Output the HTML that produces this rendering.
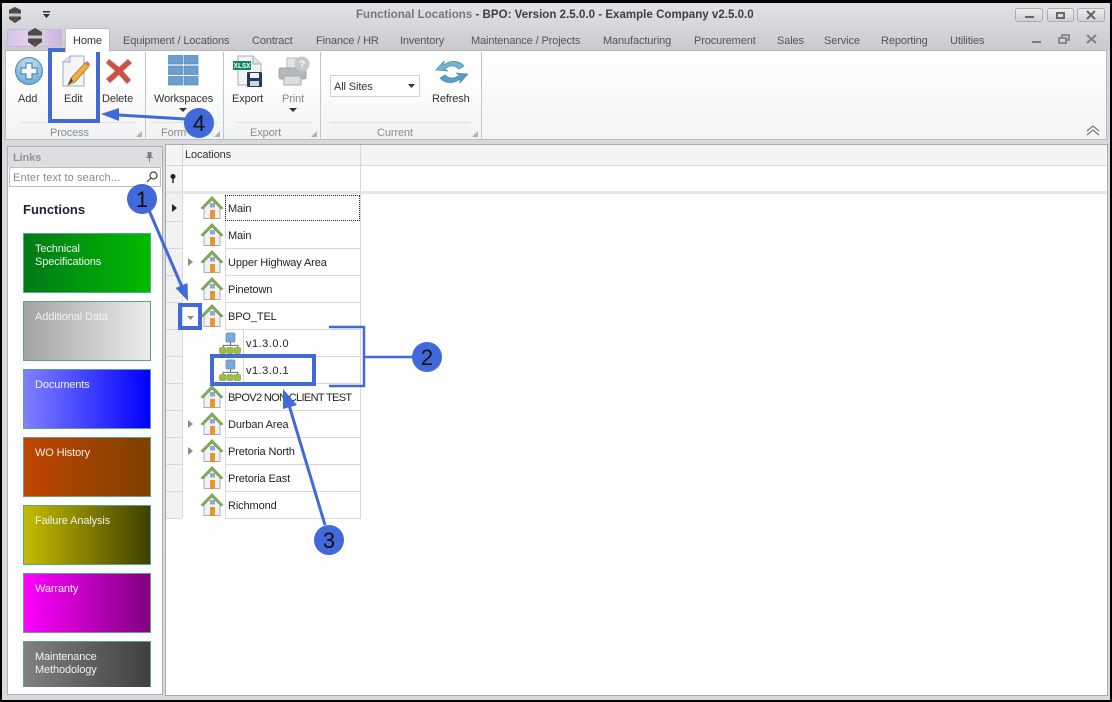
<!DOCTYPE html>
<html><head><meta charset="utf-8">
<style>
html,body{margin:0;padding:0}
body{width:1112px;height:702px;overflow:hidden;position:relative;background:#d4d6da;font-family:"Liberation Sans",sans-serif;font-size:11px;letter-spacing:-.12px;color:#2b2b2b}
.a{position:absolute}
.t{position:absolute;white-space:nowrap;line-height:14px}
.tab{color:#555;top:34px}
.lbl{color:#333;top:92px;text-align:center}
.grp{color:#8b8b8b;top:126px}
.sep{position:absolute;top:52px;width:1px;height:88px;background:#c4c6ca}
.tile{position:absolute;left:23px;width:126px;border:1px solid #58a58a;color:#f2f2f2;line-height:13px;box-sizing:content-box}
.tile span{position:absolute;left:11px;top:9px}
.hl{position:absolute;left:225px;width:135px;height:1px;background:#d8d8d8}
.ind{position:absolute;left:166px;width:16px;height:1px;background:#d8d8d8}
.cell{position:absolute;color:#222;white-space:nowrap;line-height:14px}
</style></head>
<body>
<svg width="0" height="0" style="position:absolute"><defs>
<symbol id="house" viewBox="0 0 24 25">
<path d="M4 12V23.500H20V12L12 4.500Z" fill="#f1f2f4" stroke="#a9adb3"/>
<path d="M1 13L12 1.500L23 13L21 14L12 5L3 14Z" fill="#87ad5d" stroke="#6d9447" stroke-width=".6"/>
<rect x="10" y="15" width="5" height="9" fill="#e5962e"/>
<rect x="10" y="8" width="5" height="4.500" fill="#8da9cf"/>
</symbol>
<symbol id="net" viewBox="0 0 24 24">
<rect x="7.500" y="1" width="10" height="10" rx="1.500" fill="#7ba9dc" stroke="#5e86b5" stroke-width=".6"/>
<path d="M12.500 11V15M4.500 17V14.500H20.500V17" fill="none" stroke="#555"/>
<rect x=".5" y="17" width="7" height="6.500" rx="1.500" fill="#9cbf3f" stroke="#7e9d3a" stroke-width=".6"/>
<rect x="8.500" y="17" width="7" height="6.500" rx="1.500" fill="#9cbf3f" stroke="#7e9d3a" stroke-width=".6"/>
<rect x="16.500" y="17" width="7" height="6.500" rx="1.500" fill="#9cbf3f" stroke="#7e9d3a" stroke-width=".6"/>
</symbol>
</defs></svg>

<!-- title bar -->
<div class="a" style="left:0;top:0;width:1112px;height:50px;background:linear-gradient(#e3e4e7,#c8cace)"></div>
<svg class="a" style="left:6px;top:6px" width="18" height="18" viewBox="0 0 18 18"><path d="M9 1L15 4V13L9 17L3 13V4Z" fill="#4a4a4a"/><rect x="3" y="7.500" width="12" height="3" fill="#c9c9c9"/><path d="M7 13h4l-2 3z" fill="#9c3a32"/></svg>
<svg class="a" style="left:42px;top:11px" width="10" height="8" viewBox="0 0 10 8"><rect x="1" y="0" width="7" height="1.500" fill="#333"/><path d="M1 3H8L4.500 7Z" fill="#333"/></svg>
<div class="t" style="left:356px;top:8px;font-weight:bold;font-size:11.5px;letter-spacing:.03px;color:#3a3f48"><span style="color:#74777d">Functional Locations</span> - BPO: Version 2.5.0.0 - Example Company v2.5.0.0</div>

<!-- window buttons -->
<div class="a" style="left:1015px;top:8px;width:28px;height:14px;border:1px solid #a9acb1;border-radius:3px;box-sizing:border-box;background:linear-gradient(#eceded,#cfd1d4)"></div>
<div class="a" style="left:1047px;top:8px;width:27px;height:14px;border:1px solid #a9acb1;border-radius:3px;box-sizing:border-box;background:linear-gradient(#eceded,#cfd1d4)"></div>
<div class="a" style="left:1077px;top:8px;width:28px;height:14px;border:1px solid #a9acb1;border-radius:3px;box-sizing:border-box;background:linear-gradient(#eceded,#cfd1d4)"></div>
<div class="a" style="left:1025px;top:16px;width:9px;height:2px;background:#666"></div>
<div class="a" style="left:1056px;top:12px;width:5px;height:3px;border:2px solid #666"></div>
<svg class="a" style="left:1086px;top:10px" width="10" height="10" viewBox="0 0 10 10"><path d="M1 1L9 9M9 1L1 9" stroke="#666" stroke-width="2"/></svg>
<div class="a" style="left:1032px;top:41px;width:9px;height:2px;background:#7d7d7d"></div>
<svg class="a" style="left:1058px;top:34px" width="12" height="10" viewBox="0 0 12 10"><rect x="4" y="1" width="7" height="5" fill="none" stroke="#777" stroke-width="1.500"/><rect x="1" y="4" width="7" height="5" fill="#d0d2d5" stroke="#777" stroke-width="1.500"/></svg>
<svg class="a" style="left:1086px;top:34px" width="11" height="10" viewBox="0 0 11 10"><path d="M1 1L10 9M10 1L1 9" stroke="#808080" stroke-width="2"/></svg>

<!-- app button -->
<div class="a" style="left:7px;top:29px;width:55px;height:18px;background:linear-gradient(90deg,#d8c3ea,#e5d3ef 50%,#c9b3de);border:1px solid #c3bccb;box-sizing:border-box"></div>
<svg class="a" style="left:25px;top:27px" width="20" height="21" viewBox="0 0 20 21"><path d="M10 1L17 5V15L10 20L3 15V5Z" fill="#4a4a4a"/><rect x="3" y="8.500" width="14" height="3" fill="#c9c9c9"/><path d="M8 16h4l-2 3z" fill="#9c3a32"/></svg>

<!-- tabs -->
<div class="a" style="left:65px;top:28px;width:45px;height:24px;background:#fff;border:1px solid #c0c2c6;border-bottom:none;box-sizing:border-box;z-index:2"></div>
<div class="t tab" style="left:73px;color:#333;z-index:3">Home</div>
<div class="t tab" style="left:123px">Equipment / Locations</div>
<div class="t tab" style="left:252px">Contract</div>
<div class="t tab" style="left:316px">Finance / HR</div>
<div class="t tab" style="left:400px">Inventory</div>
<div class="t tab" style="left:471px">Maintenance / Projects</div>
<div class="t tab" style="left:603px">Manufacturing</div>
<div class="t tab" style="left:694px">Procurement</div>
<div class="t tab" style="left:777px">Sales</div>
<div class="t tab" style="left:824px">Service</div>
<div class="t tab" style="left:881px">Reporting</div>
<div class="t tab" style="left:950px">Utilities</div>

<!-- ribbon -->
<div class="a" style="left:5px;top:50px;width:1102px;height:90px;background:linear-gradient(#fff 30%,#f1f2f3);border:1px solid #b9bbbf;border-top:1px solid #b5b7bb;box-sizing:border-box"></div>
<div class="sep" style="left:145px"></div>
<div class="sep" style="left:223px"></div>
<div class="sep" style="left:320px"></div>
<div class="sep" style="left:481px"></div>
<div class="a" style="left:482px;top:51px;width:624px;height:88px;background:linear-gradient(#fff,#f4f4f5)"></div>
<div class="a" style="left:20px;top:122px;width:115px;height:1px;background:#dedfe1"></div>
<div class="a" style="left:150px;top:122px;width:68px;height:1px;background:#dedfe1"></div>
<div class="a" style="left:235px;top:122px;width:78px;height:1px;background:#dedfe1"></div>
<div class="a" style="left:330px;top:122px;width:140px;height:1px;background:#dedfe1"></div>

<!-- ribbon icons -->
<svg class="a" style="left:14px;top:56px" width="30" height="30" viewBox="0 0 30 30"><defs><radialGradient id="b1" cx=".5" cy=".3" r=".8"><stop offset="0" stop-color="#d5e8f6"/><stop offset="1" stop-color="#5b9fcc"/></radialGradient></defs><circle cx="15" cy="15" r="13.500" fill="url(#b1)" stroke="#4f89b3"/><path d="M12 7H18V12H23V18H18V23H12V18H7V12H12Z" fill="#f5f9fc" stroke="#4d86ae" stroke-width="1.200"/></svg>
<svg class="a" style="left:60px;top:54px" width="30" height="34" viewBox="0 0 30 34"><path d="M3 8L10 2H24V32H3Z" fill="#f3f5f9" stroke="#a4a9b3"/><path d="M3 8H10V2" fill="#dfe3ea" stroke="#a4a9b3"/><path d="M8 31L11 24L25 9L29 12L15 28Z" fill="#f0b13f" stroke="#a8742a" stroke-width=".8"/><path d="M25 9L27 7L30 10L29 12Z" fill="#d9776a"/><path d="M8 31L11 24L13 27Z" fill="#444"/></svg>
<svg class="a" style="left:106px;top:58px" width="26" height="26" viewBox="0 0 26 26"><path d="M3 1L13 9L22 1L26 5L17 13L25 22L21 26L13 17L4 25L0 21L9 13L0 5Z" fill="#cf4f43" stroke="#b9b3ae" stroke-width=".6"/></svg>
<svg class="a" style="left:168px;top:55px" width="31" height="31" viewBox="0 0 31 31"><g fill="#6a9fd0" stroke="#4f81b4" stroke-width=".7"><rect x=".500" y=".500" width="14" height="8.500"/><rect x="16" y=".500" width="14" height="8.500"/><rect x=".500" y="11" width="14" height="8.500"/><rect x="16" y="11" width="14" height="8.500"/><rect x=".500" y="21.500" width="14" height="8.500"/><rect x="16" y="21.500" width="14" height="8.500"/></g></svg>
<svg class="a" style="left:232px;top:55px" width="32" height="32" viewBox="0 0 32 32"><path d="M6 1H21L29 9V30H6Z" fill="#f2f4f8" stroke="#a8acb5"/><path d="M21 1V9H29" fill="#dee2e9" stroke="#a8acb5"/><rect x="1" y="6" width="18" height="9" fill="#0d8a5f"/><text x="10" y="13" font-family="Liberation Mono,monospace" font-size="7" font-weight="bold" fill="#fff" text-anchor="middle" letter-spacing="0">XLSX</text><rect x="15" y="17" width="15" height="15" rx="1" fill="#26395e"/><rect x="18" y="18" width="9" height="5" fill="#f0f3f7"/><rect x="18" y="26" width="9" height="5" fill="#cfd6e0"/></svg>
<svg class="a" style="left:278px;top:55px" width="32" height="31" viewBox="0 0 32 31"><rect x="9" y="3" width="14" height="12" fill="#e2e3e5" stroke="#b6b8bb"/><rect x="1" y="13" width="27" height="11" rx="2" fill="#b5b8bb" stroke="#a1a4a7"/><rect x="6" y="21" width="17" height="9" fill="#dcdddf" stroke="#a8aaad"/><circle cx="24" cy="9" r="7.500" fill="#c6c8cb"/><text x="24" y="13" font-family="Liberation Sans,sans-serif" font-size="11" font-weight="bold" fill="#f2f2f2" text-anchor="middle">?</text></svg>
<svg class="a" style="left:435px;top:57px" width="34" height="30" viewBox="0 0 34 30"><path d="M1 13L9 4V8C15 3 24 3 29 9L24 12C20 8 14 8 10 12L13 14Z" fill="#75b1d4" stroke="#4f8cb2" stroke-width=".7"/><path d="M33 17L25 26V22C19 27 10 27 5 21L10 18C14 22 20 22 24 18L21 16Z" fill="#5d9cc2" stroke="#4f8cb2" stroke-width=".7"/></svg>

<!-- ribbon labels -->
<div class="t lbl" style="left:18px">Add</div>
<div class="t lbl" style="left:64px">Edit</div>
<div class="t lbl" style="left:102px">Delete</div>
<div class="t lbl" style="left:154px">Workspaces</div>
<div class="t lbl" style="left:232px">Export</div>
<div class="t lbl" style="left:282px;color:#8a8a8a">Print</div>
<div class="t lbl" style="left:432px">Refresh</div>
<svg class="a" style="left:179px;top:108px" width="8" height="5"><path d="M0 0H8L4 4Z" fill="#333"/></svg>
<svg class="a" style="left:289px;top:108px" width="8" height="5"><path d="M0 0H8L4 4Z" fill="#333"/></svg>
<div class="t grp" style="left:50px">Process</div>
<div class="t grp" style="left:161px">Form</div>
<div class="t grp" style="left:250px">Export</div>
<div class="t grp" style="left:377px">Current</div>
<svg class="a" style="left:136px;top:131px" width="6" height="6"><path d="M6 0V6H0Z" fill="#b0b2b5"/></svg>
<svg class="a" style="left:214px;top:131px" width="6" height="6"><path d="M6 0V6H0Z" fill="#b0b2b5"/></svg>
<svg class="a" style="left:311px;top:131px" width="6" height="6"><path d="M6 0V6H0Z" fill="#b0b2b5"/></svg>
<svg class="a" style="left:472px;top:131px" width="6" height="6"><path d="M6 0V6H0Z" fill="#b0b2b5"/></svg>
<svg class="a" style="left:1086px;top:125px" width="14" height="11" viewBox="0 0 14 11" fill="none" stroke="#777" stroke-width="1.200"><path d="M1 6L7 1L13 6"/><path d="M1 10L7 5L13 10"/></svg>

<!-- combo -->
<div class="a" style="left:330px;top:75px;width:90px;height:22px;background:#fff;border:1px solid #cfd1d4;box-sizing:border-box"></div>
<div class="t" style="left:334px;top:80px;color:#333">All Sites</div>
<svg class="a" style="left:408px;top:84px" width="7" height="4"><path d="M0 0H7L3.500 4Z" fill="#333"/></svg>

<!-- lower bg -->
<div class="a" style="left:0;top:140px;width:1112px;height:562px;background:#d7d9dc"></div>

<!-- links panel -->
<div class="a" style="left:7px;top:146px;width:156px;height:549px;background:#fff;border:1px solid #aeb0b4;box-sizing:border-box"></div>
<div class="a" style="left:8px;top:147px;width:154px;height:20px;background:#dcdee1"></div>
<div class="t" style="left:13px;top:151px;font-weight:bold;color:#8f939a">Links</div>
<svg class="a" style="left:145px;top:152px" width="9" height="10" viewBox="0 0 9 10"><path d="M2.500 0H6.500V5H8V6H5V10H4V6H1V5H2.500Z" fill="#7d7f83"/></svg>
<div class="a" style="left:9px;top:167px;width:152px;height:20px;background:#fff;border:1px solid #bcbec2;box-sizing:border-box"></div>
<div class="t" style="left:13px;top:171px;color:#8a8a8a;letter-spacing:.12px">Enter text to search...</div>
<svg class="a" style="left:146px;top:171px" width="12" height="12" viewBox="0 0 12 12" fill="none" stroke="#444" stroke-width="1.200"><circle cx="7.500" cy="4.500" r="3.500"/><path d="M5 7L1 11"/></svg>
<div class="t" style="left:23px;top:203px;font-weight:bold;font-size:13px;letter-spacing:0;color:#1c2433">Functions</div>

<div class="tile" style="top:233px;height:58px;background:linear-gradient(90deg,#007a18,#00bb00)"><span>Technical<br>Specifications</span></div>
<div class="tile" style="top:301px;height:58px;background:linear-gradient(90deg,#a3a3a3,#ececec)"><span>Additional Data</span></div>
<div class="tile" style="top:369px;height:58px;background:linear-gradient(90deg,#8080ff,#0000ff)"><span>Documents</span></div>
<div class="tile" style="top:437px;height:58px;background:linear-gradient(90deg,#c04500,#7f4000)"><span>WO History</span></div>
<div class="tile" style="top:505px;height:58px;background:linear-gradient(90deg,#c4bc00,#3f3f00)"><span>Failure Analysis</span></div>
<div class="tile" style="top:573px;height:58px;background:linear-gradient(90deg,#ff00ff,#800080)"><span>Warranty</span></div>
<div class="tile" style="top:641px;height:45px;border-bottom:none;background:linear-gradient(90deg,#808080,#404040)"><span>Maintenance<br>Methodology</span></div>

<!-- grid -->
<div class="a" style="left:165px;top:144px;width:943px;height:552px;background:#fff;border:1px solid #a9abaf;box-sizing:border-box"></div>
<div class="a" style="left:166px;top:145px;width:941px;height:20px;background:#f4f4f5"></div>
<div class="a" style="left:182px;top:145px;width:1px;height:46px;background:#d6d7d9"></div>
<div class="a" style="left:360px;top:145px;width:1px;height:46px;background:#d6d7d9"></div>
<div class="a" style="left:166px;top:165px;width:941px;height:1px;background:#d6d7d9"></div>
<div class="a" style="left:166px;top:191px;width:941px;height:3px;background:#e4e5e7"></div>
<div class="a" style="left:166px;top:166px;width:16px;height:25px;background:#f4f4f5"></div>
<div class="t" style="left:185px;top:148px;color:#333">Locations</div>
<svg class="a" style="left:170px;top:174px" width="6" height="9" viewBox="0 0 6 9"><circle cx="3" cy="2.500" r="2.500" fill="#222"/><rect x="2.300" y="4" width="1.400" height="5" fill="#222"/></svg>

<div class="a" style="left:166px;top:194px;width:16px;height:324px;background:#f1f1f2"></div>
<div class="a" style="left:182px;top:194px;width:1px;height:324px;background:#d8d8d8"></div>
<div class="a" style="left:360px;top:194px;width:1px;height:325px;background:#d8d8d8"></div>
<div class="a" style="left:225px;top:194px;width:1px;height:135px;background:#d8d8d8"></div>
<div class="a" style="left:225px;top:383px;width:1px;height:135px;background:#d8d8d8"></div>
<div class="a" style="left:243px;top:329px;width:1px;height:54px;background:#d8d8d8"></div>

<div class="ind" style="top:221px"></div>
<div class="hl" style="top:248px"></div><div class="ind" style="top:248px"></div>
<div class="hl" style="top:275px"></div><div class="ind" style="top:275px"></div>
<div class="hl" style="top:302px"></div><div class="ind" style="top:302px"></div>
<div class="hl" style="top:329px"></div><div class="ind" style="top:329px"></div>
<div class="a" style="left:243px;top:356px;width:117px;height:1px;background:#d8d8d8"></div><div class="ind" style="top:356px"></div>
<div class="hl" style="top:383px"></div><div class="ind" style="top:383px"></div>
<div class="hl" style="top:410px"></div><div class="ind" style="top:410px"></div>
<div class="hl" style="top:437px"></div><div class="ind" style="top:437px"></div>
<div class="hl" style="top:464px"></div><div class="ind" style="top:464px"></div>
<div class="hl" style="top:491px"></div><div class="ind" style="top:491px"></div>
<div class="hl" style="top:518px"></div><div class="ind" style="top:518px"></div>

<div class="a" style="left:225px;top:195px;width:135px;height:26px;border:1px dotted #222;box-sizing:border-box"></div>
<svg class="a" style="left:172px;top:204px" width="5" height="8"><path d="M0 0L5 4L0 8Z" fill="#222"/></svg>

<svg class="a" style="left:200px;top:195px" width="24" height="25"><use href="#house"/></svg>
<svg class="a" style="left:200px;top:222px" width="24" height="25"><use href="#house"/></svg>
<svg class="a" style="left:200px;top:249px" width="24" height="25"><use href="#house"/></svg>
<svg class="a" style="left:200px;top:276px" width="24" height="25"><use href="#house"/></svg>
<svg class="a" style="left:200px;top:303px" width="24" height="25"><use href="#house"/></svg>
<svg class="a" style="left:219px;top:332px" width="22" height="22"><use href="#net"/></svg>
<svg class="a" style="left:219px;top:359px" width="22" height="22"><use href="#net"/></svg>
<svg class="a" style="left:200px;top:384px" width="24" height="25"><use href="#house"/></svg>
<svg class="a" style="left:200px;top:411px" width="24" height="25"><use href="#house"/></svg>
<svg class="a" style="left:200px;top:438px" width="24" height="25"><use href="#house"/></svg>
<svg class="a" style="left:200px;top:465px" width="24" height="25"><use href="#house"/></svg>
<svg class="a" style="left:200px;top:492px" width="24" height="25"><use href="#house"/></svg>

<svg class="a" style="left:188px;top:258px" width="5" height="8"><path d="M0 0L5 4L0 8Z" fill="#8a8a8a"/></svg>
<svg class="a" style="left:188px;top:420px" width="5" height="8"><path d="M0 0L5 4L0 8Z" fill="#8a8a8a"/></svg>
<svg class="a" style="left:188px;top:447px" width="5" height="8"><path d="M0 0L5 4L0 8Z" fill="#8a8a8a"/></svg>
<svg class="a" style="left:187px;top:316px" width="7" height="4"><path d="M0 0H7L3.500 4Z" fill="#8a8a8a"/></svg>

<div class="cell" style="left:228px;top:202px">Main</div>
<div class="cell" style="left:228px;top:229px">Main</div>
<div class="cell" style="left:228px;top:256px">Upper Highway Area</div>
<div class="cell" style="left:228px;top:283px">Pinetown</div>
<div class="cell" style="left:228px;top:310px">BPO_TEL</div>
<div class="cell" style="left:246px;top:337px;letter-spacing:.5px">v1.3.0.0</div>
<div class="cell" style="left:246px;top:364px;letter-spacing:.5px">v1.3.0.1</div>
<div class="cell" style="left:228px;top:391px;letter-spacing:-.65px">BPOV2 NON CLIENT TEST</div>
<div class="cell" style="left:228px;top:418px">Durban Area</div>
<div class="cell" style="left:228px;top:445px">Pretoria North</div>
<div class="cell" style="left:228px;top:472px">Pretoria East</div>
<div class="cell" style="left:228px;top:499px">Richmond</div>

<!-- annotations -->
<svg class="a" style="left:0;top:0" width="1112" height="702" viewBox="0 0 1112 702">
<g fill="none" stroke="#4169d9" stroke-width="4">
<rect x="50" y="50" width="48" height="71"/>
<rect x="180" y="305" width="20" height="23"/>
<rect x="212" y="356" width="102" height="28"/>
</g>
<g fill="none" stroke="#4169d9" stroke-width="2.500">
<path d="M329 327H364V386H329"/>
<path d="M364 357H415"/>
<path d="M148 208L182 287" stroke-width="3"/>
<path d="M325 525L289 405" stroke-width="3"/>
<path d="M185 119L118 115" stroke-width="3"/>
</g>
<g fill="#4169d9">
<path d="M188 301L175.500 288L187.500 283Z"/>
<path d="M283 389L283 409L297 405Z"/>
<path d="M101 114L119 108L119 121Z"/>
</g>
<circle cx="142" cy="199" r="15" fill="#4169d9"/>
<circle cx="427" cy="357" r="15" fill="#4169d9"/>
<circle cx="329" cy="540" r="15" fill="#4169d9"/>
<circle cx="199" cy="123" r="15" fill="#4169d9"/>
<g font-family="Liberation Sans,sans-serif" font-size="22" fill="#111" text-anchor="middle" letter-spacing="0">
<text x="142" y="207">1</text>
<text x="427" y="365">2</text>
<text x="329" y="548">3</text>
<text x="199" y="131">4</text>
</g>
</svg>

<!-- outer black frame -->
<div class="a" style="left:0;top:0;width:1112px;height:3px;background:#000"></div>
<div class="a" style="left:0;top:0;width:2px;height:702px;background:#000"></div>
<div class="a" style="left:1110px;top:0;width:2px;height:702px;background:#000"></div>
<div class="a" style="left:0;top:700px;width:1112px;height:2px;background:#000"></div>
</body></html>
